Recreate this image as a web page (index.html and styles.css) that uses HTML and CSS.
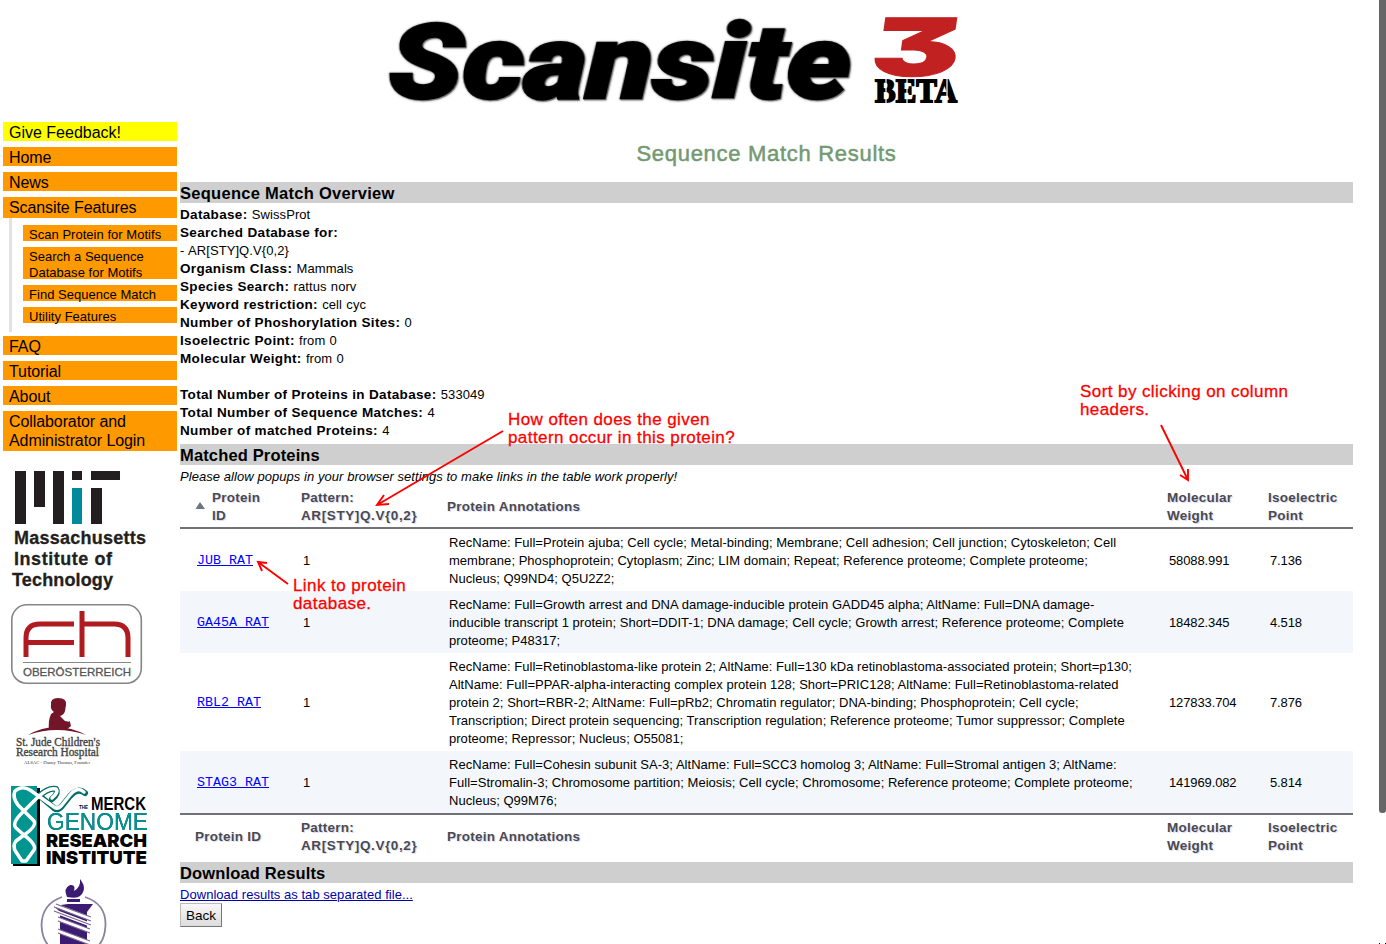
FILE: index.html
```html
<!DOCTYPE html>
<html lang="en">
<head>
<meta charset="utf-8">
<title>Scansite 3 - Sequence Match Results</title>
<link rel="stylesheet" href="styles.css">
</head>
<body>
<div class="page">
<header class="banner">
<svg class="logo" width="580" height="112" viewBox="385 0 580 112">
<text class="logo-word" transform="translate(388 98) skewX(-2)" x="0" y="0" textLength="462" lengthAdjust="spacingAndGlyphs">Scansite</text>
<text class="logo-three" transform="translate(868 76) skewX(-8) scale(1.66 1)">3</text>
<text class="logo-beta" x="875" y="102" textLength="82" lengthAdjust="spacingAndGlyphs">BETA</text>
<path class="stencil" d="M886 78V103M907 78V103M947 78V103"/>
</svg>
</header>
<div class="columns">
<aside class="sidebar">
<nav class="menu">
<a class="item feedback">Give Feedback!</a>
<a class="item">Home</a>
<a class="item">News</a>
<div class="group">
<a class="item open">Scansite Features</a>
<div class="submenu">
<a class="sub">Scan Protein for Motifs</a>
<a class="sub two-line">Search a Sequence<br>Database for Motifs</a>
<a class="sub">Find Sequence Match</a>
<a class="sub">Utility Features</a>
</div>
</div>
<a class="item">FAQ</a>
<a class="item">Tutorial</a>
<a class="item">About</a>
<a class="item tall">Collaborator and<br>Administrator Login</a>
</nav>
<div class="partners">
<svg width="170" height="484" viewBox="0 460 170 484">
<g fill="#231f20"><path d="M15 471h11v53H15zM34 471h11v36H34zM53 471h11v53H53zM72 471h10v9H72zM91 471h29v9H91zM91 488h11v36H91z"/></g>
<path fill="#008a9b" d="M72 488h10v36H72z"/>
<g class="mit"><text x="14" y="544" textLength="132">Massachusetts</text><text x="14" y="565" textLength="98">Institute of</text><text x="12" y="586" textLength="101">Technology</text></g>
<rect x="11.8" y="604.8" width="129.500" height="78.500" rx="15" fill="#fff" stroke="#858585" stroke-width="1.600"/>
<g fill="none" stroke="#b01b20" stroke-width="5"><path d="M26 657V638Q26 624 40 624H74M26 642.500H74M82 611V657M82 624H114Q128 624 128 638V657"/></g>
<path d="M23 662.500H131" stroke="#888"/>
<text class="fh" x="23" y="675.500" textLength="108" lengthAdjust="spacingAndGlyphs">OBERÖSTERREICH</text>
<g fill="#731529"><path d="M51 705Q50 698 58 698Q67 698 66 705L65 711Q64 715 60 716L65 721L70 722L71 726L66 730H49Q48 721 51 714L54 712Q50 709 51 705ZM63 726L70 721L69 725Z"/><path d="M28 735Q56 719 86 735Q57 725 28 735Z"/></g>
<g class="jude"><text x="16" y="746" textLength="84" lengthAdjust="spacingAndGlyphs">St. Jude Children's</text><text x="16" y="756" textLength="83" lengthAdjust="spacingAndGlyphs">Research Hospital</text></g>
<text class="jude-small" x="24" y="764" textLength="66" lengthAdjust="spacingAndGlyphs">ALSAC - Danny Thomas, Founder</text>
<path d="M13 788H40V866H13z" fill="#000"/><path d="M11 786H37V864H11z" fill="#009591"/>
<g fill="none" stroke-linecap="round" stroke-linejoin="round">
<path stroke="#006b67" stroke-width="6" d="M39 796Q49 787 56 789Q59 793 52 799M41 797L54 808Q58 811 62 806L70 796Q78 787 85 793"/>
<path stroke="#fff" stroke-width="3.500" d="M84 792Q77 786 70 795L62 805Q58 810 54 807L30 790Q22 785 15 791Q12 797 18 805L24 811L34 821Q37 826 24 835L16 841Q12 846 16 852L22 861H26L34 850Q37 845 24 835L16 828Q11 823 24 811L39 796Q49 787 56 789Q59 792 52 798"/></g>
<g class="merck"><text class="the" x="79" y="809" textLength="9" lengthAdjust="spacingAndGlyphs">THE</text><text x="91" y="809.500" textLength="55" lengthAdjust="spacingAndGlyphs">MERCK</text><text class="genome" x="47" y="829.500" textLength="101" lengthAdjust="spacingAndGlyphs">GENOME</text><text class="heavy" x="46" y="846.500" textLength="101" lengthAdjust="spacingAndGlyphs">RESEARCH</text><text class="heavy" x="46" y="863.500" textLength="101" lengthAdjust="spacingAndGlyphs">INSTITUTE</text></g>
<path d="M67 897Q63 888 70 885Q76 884 74 891Q81 887 80 879Q88 889 80 896Q77 899 67 897Z" fill="#3c1b72"/>
<path d="M62 897Q42 904 41.500 925Q42 938 48 945M85 897Q106 904 105.500 925Q105 938 99 945" fill="none" stroke="#8c829f" stroke-width="1.800"/>
<path d="M67 899H80V902H67zM68 904H93L87 912V945H60V912L54 906Z" fill="#3c1b72"/>
<path d="M55 905L91 919M54 911L91 925M58 919L90 931M58 931L90 943" stroke="#fff" stroke-width="4"/><path d="M56 904L91 917M54 907L91 921M54 911L91 925M58 917L90 929M58 921L90 933M58 929L90 941M58 933L90 945" stroke="#77658f" stroke-width="1.100"/>
</svg>
</div>
</aside>
<main class="content">
<h1>Sequence Match Results</h1>
<h2 class="wide">Sequence Match Overview</h2>
<div class="facts">
<p><b>Database:</b> SwissProt</p>
<p><b>Searched Database for:</b></p>
<p>- AR[STY]Q.V{0,2}</p>
<p><b>Organism Class:</b> Mammals</p>
<p><b>Species Search:</b> rattus norv</p>
<p><b>Keyword restriction:</b> cell cyc</p>
<p><b>Number of Phoshorylation Sites:</b> 0</p>
<p><b>Isoelectric Point:</b> from 0</p>
<p><b>Molecular Weight:</b> from 0</p>
<p class="gap"><b>Total Number of Proteins in Database:</b> 533049</p>
<p><b>Total Number of Sequence Matches:</b> 4</p>
<p><b>Number of matched Proteins:</b> 4</p>
</div>
<h2>Matched Proteins</h2>
<p class="note">Please allow popups in your browser settings to make links in the table work properly!</p>
<table>
<colgroup><col class="c1"><col class="c2"><col class="c3"><col class="c4"><col class="c5"></colgroup>
<thead><tr><th><div class="sorted"><svg width="10" height="7" viewBox="0 0 10 7"><path d="M.5 7L5 0L10 7Z" fill="#6b7683"/></svg><span>Protein<br>ID</span></div></th><th>Pattern:<br><span class="pattern">AR[STY]Q.V{0,2}</span></th><th>Protein Annotations</th><th>Molecular<br>Weight</th><th>Isoelectric<br>Point</th></tr></thead>
<tbody>
<tr><td><a>JUB_RAT</a></td><td>1</td><td>RecName: Full=Protein ajuba; Cell cycle; Metal-binding; Membrane; Cell adhesion; Cell junction; Cytoskeleton; Cell<br>membrane; Phosphoprotein; Cytoplasm; Zinc; LIM domain; Repeat; Reference proteome; Complete proteome;<br>Nucleus; Q99ND4; Q5U2Z2;</td><td>58088.991</td><td>7.136</td></tr>
<tr><td><a>GA45A_RAT</a></td><td>1</td><td>RecName: Full=Growth arrest and DNA damage-inducible protein GADD45 alpha; AltName: Full=DNA damage-<br>inducible transcript 1 protein; Short=DDIT-1; DNA damage; Cell cycle; Growth arrest; Reference proteome; Complete<br>proteome; P48317;</td><td>18482.345</td><td>4.518</td></tr>
<tr><td><a>RBL2_RAT</a></td><td>1</td><td>RecName: Full=Retinoblastoma-like protein 2; AltName: Full=130 kDa retinoblastoma-associated protein; Short=p130;<br>AltName: Full=PPAR-alpha-interacting complex protein 128; Short=PRIC128; AltName: Full=Retinoblastoma-related<br>protein 2; Short=RBR-2; AltName: Full=pRb2; Chromatin regulator; DNA-binding; Phosphoprotein; Cell cycle;<br>Transcription; Direct protein sequencing; Transcription regulation; Reference proteome; Tumor suppressor; Complete<br>proteome; Repressor; Nucleus; O55081;</td><td>127833.704</td><td>7.876</td></tr>
<tr><td><a>STAG3_RAT</a></td><td>1</td><td>RecName: Full=Cohesin subunit SA-3; AltName: Full=SCC3 homolog 3; AltName: Full=Stromal antigen 3; AltName:<br>Full=Stromalin-3; Chromosome partition; Meiosis; Cell cycle; Chromosome; Reference proteome; Complete proteome;<br>Nucleus; Q99M76;</td><td>141969.082</td><td>5.814</td></tr>
</tbody>
<tfoot><tr><th>Protein ID</th><th>Pattern:<br><span class="pattern">AR[STY]Q.V{0,2}</span></th><th>Protein Annotations</th><th>Molecular<br>Weight</th><th>Isoelectric<br>Point</th></tr></tfoot>
</table>
<h2>Download Results</h2>
<p class="download"><a>Download results as tab separated file...</a></p>
<button>Back</button>
</main>
</div>
<div class="callout how">How often does the given<br>pattern occur in this protein?</div>
<div class="callout link">Link to protein<br>database.</div>
<div class="callout sort">Sort by clicking on column<br>headers.</div>
<svg class="arrows" width="1386" height="944" viewBox="0 0 1386 944"><path d="M503 431L377 505M384 495L377 505L389 504M288 584L258 562M262 571L258 562L267 563M1161 425L1188 480M1180 475L1188 480L1188 469"/><path class="specks" d="M1379 943h1v1h-1zM1385 943h1v1h-1z"/></svg>
<div class="scroll"></div>
</div>
</body>
</html>
```
FILE: styles.css
```css
body { margin: 0; background: #fff; color: #000; font: 13px/18px "Liberation Sans", Arial, sans-serif; }
.page { position: relative; width: 1386px; height: 944px; overflow: hidden; }
.banner { height: 122px; padding-left: 385px; }
.logo { display: block; overflow: visible; }
.logo-word { font: italic 900 103px Roboto, sans-serif; fill: #000; stroke: #000; stroke-width: 2.5px; filter: drop-shadow(1px 1px .5px #777) drop-shadow(0 0 1px #888); }
.logo-three { font: 900 80px Inter, sans-serif; font-feature-settings: "cv09"; fill: #c22122; stroke: #c22122; stroke-width: 1px; }
.logo-beta { font: bold 34px "Liberation Serif", serif; stroke: #000; stroke-width: 1.8px; }
.stencil { stroke: #fff; stroke-width: 1.2px; fill: none; }
.columns { display: flex; height: 822px; }
.sidebar { width: 180px; height: 822px; flex: none; overflow: hidden; }
.menu { display: flex; flex-direction: column; gap: 6px; width: 174px; padding-left: 3px; height: 338px; }
.item { display: block; flex: none; height: 19px; padding-left: 6px; background: #f90; font-size: 16px; line-height: 22px; letter-spacing: -.09px; white-space: nowrap; }
.feedback { background: #ff0; letter-spacing: 0; }
.open { height: 21px; }
.tall { height: 40px; line-height: 19px; padding-top: 1px; box-sizing: border-box; }
.group { flex: none; height: 133px; }
.submenu { display: flex; flex-direction: column; gap: 6px; margin-left: 6px; border-left: 3px solid #e2e2e2; padding: 7px 0 9px 11px; }
.sub { display: block; padding: 2px 0 0 6px; background: #f90; font-size: 13px; line-height: 16px; height: 16px; white-space: nowrap; box-sizing: border-box; letter-spacing: .03px; }
.two-line { height: 32px; }
.mit { font: bold 18px "Liberation Sans", sans-serif; fill: #231f20; stroke: #231f20; stroke-width: .3px; }
.fh { font: 11.5px "Liberation Sans", sans-serif; fill: #555; stroke: #555; stroke-width: .3px; }
.jude { font: 11.5px "Liberation Serif", serif; fill: #444; stroke: #444; stroke-width: .35px; }
.jude-small { font: 4px "Liberation Serif", serif; fill: #333; }
.merck { font: bold 18px "Liberation Sans", sans-serif; }
.the { font-size: 6px; }
.genome { font-weight: normal; font-size: 24px; fill: #009591; filter: drop-shadow(.6px .6px 0 #035); }
.heavy { font-family: Inter, sans-serif; font-weight: 900; }
.content { width: 1173px; flex: none; }
h1 { margin: 0; height: 60px; padding-top: 19px; box-sizing: border-box; font-size: 22px; line-height: 26px; font-weight: normal; color: #739972; text-align: center; -webkit-text-stroke: .5px #739972; letter-spacing: .7px; }
h2 { margin: 0; height: 21px; line-height: 23px; background: #cfcfcf; font-size: 16.5px; font-weight: bold; letter-spacing: .15px; }
.wide { letter-spacing: .28px; }
p { margin: 0; height: 18px; white-space: nowrap; }
.facts { height: 238px; padding-top: 3px; letter-spacing: .08px; word-spacing: .6px; }
.facts b { font-size: 13.5px; letter-spacing: .33px; word-spacing: 0; }
.gap { padding-top: 18px; }
.note { font-style: italic; padding-top: 3px; height: 20px; letter-spacing: .06px; }
table { width: 1173px; table-layout: fixed; border-collapse: separate; border-spacing: 0; }
.c1 { width: 106px; } .c2 { width: 146px; } .c3 { width: 720px; } .c4 { width: 101px; } .c5 { width: 100px; }
th { height: 36px; padding: 1px 0 2px 15px; text-align: left; vertical-align: middle; color: #4b4a4a; text-shadow: #ddf 1px 1px 0; white-space: nowrap; font-size: 13.5px; letter-spacing: .25px; }
.pattern { letter-spacing: .6px; }
thead th { border-bottom: 2px solid #6f7277; }
tfoot th { border-top: 2px solid #6f7277; padding: 4px 0 7px 15px; }
td { padding: 5px 0 3px 17px; white-space: nowrap; vertical-align: middle; letter-spacing: .03px; }
td:nth-child(n+4) { letter-spacing: -.12px; }
td a { font: 13.333px/18px "Liberation Mono", monospace; letter-spacing: 0; color: #00f; text-decoration: underline; }
td:first-child { padding: 4px 0 4px 17px; }
tbody tr:nth-child(even) { background: #f3f7fb; }
.sorted { display: flex; align-items: center; gap: 7px; }
.sorted svg { margin-bottom: 3px; }
.download { padding-top: 3px; height: 17px; color: #00a; text-decoration: underline; letter-spacing: .04px; }
button { display: block; width: 42px; height: 24px; padding: 0; background: linear-gradient(#f8f8f8, #ddd); border: 1px solid #bbb; border-right-color: #777; border-bottom-color: #777; font: 13.5px "Liberation Sans", sans-serif; color: #000; }
.callout { position: absolute; color: #f00; font-size: 17px; line-height: 18px; letter-spacing: .42px; white-space: nowrap; -webkit-text-stroke: .3px #f00; }
.how { left: 508px; top: 411px; }
.link { left: 293px; top: 577px; }
.sort { left: 1080px; top: 383px; }
.arrows { position: absolute; left: 0; top: 0; fill: none; stroke: #f00; stroke-width: 1.9px; }
.arrows .specks { fill: #000; stroke: none; }
.scroll { position: absolute; left: 1379px; top: -8px; width: 7px; height: 821px; background: #666; border-radius: 3px; }
```
